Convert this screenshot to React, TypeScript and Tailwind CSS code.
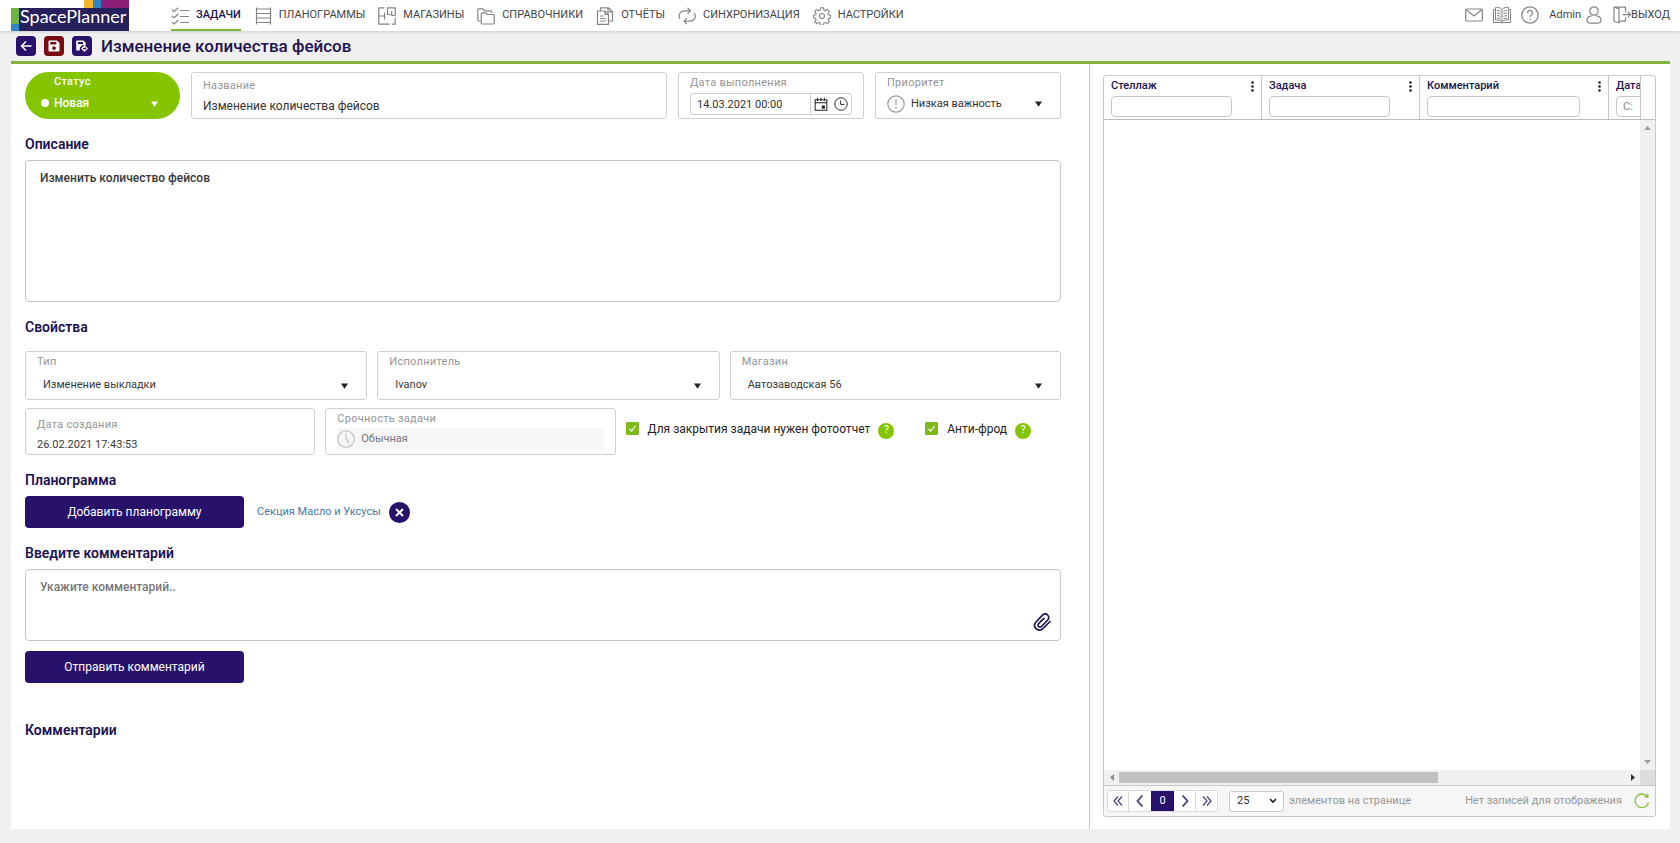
import { useState } from "react";
import type { ReactNode } from "react";

/* ---------- icons ---------- */

function LineIcon({ children, className = "size-[18px]", width = 1.2 }: { children: ReactNode; className?: string; width?: number }) {
  return (
    <svg viewBox="0 0 18 18" className={`${className} shrink-0`} fill="none" stroke="currentColor" strokeWidth={width} aria-hidden="true">
      {children}
    </svg>
  );
}

const TasksIcon = () => (
  <LineIcon>
    <path d="M.8 2.600l2.200 2L7.300.8M.8 8.800l2.200 2L7.300 7M.8 15l2.200 2 4.300-3.800M9 3.500h9M9 9.500h9M9 15.500h9" />
  </LineIcon>
);
const ShelvesIcon = () => (
  <LineIcon>
    <path d="M2.500.5v17M16.500.5v17M2.500 2h14M2.500 6.500h14M2.500 11h14M2.500 15.500h14" />
  </LineIcon>
);
const StoresIcon = () => (
  <LineIcon>
    <path d="M6.500.8H.8v16.400h10.700M14 17.200h3.200V10.500M17.200 8.500V.8H9.500v6.700h3M.8 9h5.700M6.500 5.500v7M17.200 8.500h-3.500V4" />
  </LineIcon>
);
const FoldersIcon = () => (
  <LineIcon>
    <path d="M3.500 14H1.800a1 1 0 0 1-1-1V2.800a1 1 0 0 1 1-1h4l1.700 2h6.300a1 1 0 0 1 1 1v1" />
    <path d="M4.200 6.800a1 1 0 0 1 1-1h3.600l1.500 1.700h6a1 1 0 0 1 1 1v7.500a1 1 0 0 1-1 1H5.200a1 1 0 0 1-1-1z" />
  </LineIcon>
);
const ReportsIcon = () => (
  <LineIcon>
    <path d="M1.500 4h7.500l3.500 3.500V17.300h-11zM9 4v3.500h3.500M4 9h4M4 11.500h6M4 14h6" />
    <path d="M4.500 4V.8h8l4 4V14h-4M12 .8v4h4.500" />
  </LineIcon>
);
const SyncIcon = () => (
  <LineIcon>
    <path d="M12 3.800H6.500A5.200 5.200 0 0 0 2 12M9.500.8l3 3-3 3M6.500 14.200H12A5.200 5.200 0 0 0 16.300 6M9 17.200l-3-3 3-3" />
  </LineIcon>
);
const GearIcon = () => (
  <LineIcon width={1.1}>
    <circle cx="9" cy="9" r="2.500" />
    <path d="M7.600.8h2.800l.5 2.400 1.300.6 2.100-1.400 2 2-1.400 2.100.5 1.200 2.300.5v2.700l-2.300.5-.5 1.200 1.400 2.100-2 2-2.100-1.400-1.300.6-.5 2.300H7.600l-.5-2.300-1.300-.6-2.100 1.400-2-2 1.400-2.100-.5-1.200L.5 10.900V8.200l2.100-.5.500-1.200-1.400-2.100 2-2 2.100 1.400 1.300-.6z" />
  </LineIcon>
);
const MailIcon = () => (
  <LineIcon>
    <rect x=".7" y="3" width="16.600" height="12" rx="1" />
    <path d="M1 3.500l8 6.500 8-6.500" />
  </LineIcon>
);
const BookIcon = () => (
  <LineIcon width={1}>
    <path d="M9 3.500C7.500 1.500 5 1.200 2.500 1.500v12.500C5 13.700 7.500 14 9 16c1.500-2 4-2.300 6.500-2V1.500C13 1.200 10.500 1.500 9 3.500zM9 3.500V16M2.500 3.500h-2v13H8l1 .8 1-.8h7.500v-13h-2" />
    <path d="M4 4.500q2 0 3.500 1M4 7q2 0 3.500 1M4 9.500q2 0 3.500 1M4 12q2 0 3.500 1M14 4.500q-2 0-3.500 1M14 7q-2 0-3.500 1M14 9.500q-2 0-3.500 1M14 12q-2 0-3.500 1" />
  </LineIcon>
);
const HelpIcon = () => (
  <LineIcon>
    <circle cx="9" cy="9" r="8.200" />
    <path d="M6.500 7a2.500 2.500 0 1 1 3.600 2.200Q9 9.800 9 11.200M9 12.700v1.500" />
  </LineIcon>
);
const UserIcon = () => (
  <LineIcon>
    <circle cx="9" cy="5" r="4.200" />
    <path d="M6.500 9.800C3.500 10.200 2 11.800 2 14c0 2.200 1.500 3.200 3.500 3.200h7c2 0 3.500-1 3.500-3.200 0-2.200-1.500-3.800-4.500-4.200" />
  </LineIcon>
);
const ExitIcon = () => (
  <LineIcon>
    <path d="M1 1.200l5 1.600v14l-5-1.600zM1 1.200h11.500v5M6 15.200h6.500v-4M9.500 8.700h8M14.800 6l2.700 2.700-2.700 2.700" />
  </LineIcon>
);
const CalendarIcon = () => (
  <LineIcon className="size-[14px]" width={1.300}>
    <path d="M1.500 3.500h15v13.500h-15zM1.500 7.500h15M4.500 1v4M9 1v4M13.500 1v4" />
    <path d="M10 11h4v4h-4z" fill="currentColor" stroke="none" />
  </LineIcon>
);
const ClockIcon = () => (
  <LineIcon className="size-[14px]" width={1.200}>
    <circle cx="9" cy="9" r="8" />
    <path d="M8.500 4.500v5h5" />
  </LineIcon>
);
const UrgencyIcon = () => (
  <LineIcon width={1.300}>
    <circle cx="9" cy="9" r="8.200" />
    <path d="M9 3.500V9l3 4" />
  </LineIcon>
);
const ImportanceIcon = () => (
  <LineIcon width={1.200}>
    <circle cx="9" cy="9" r="8.200" />
    <path d="M9 4.500v5.500M9 12v1.800" />
  </LineIcon>
);
const Triangle = ({ className = "" }: { className?: string }) => (
  <svg viewBox="0 0 8 6" className={`pointer-events-none h-[6px] w-[7px] shrink-0 ${className}`} aria-hidden="true">
    <path d="M0 0h8L4 6z" fill="currentColor" />
  </svg>
);

/* ---------- building blocks ---------- */

const NAV = [
  { label: "ЗАДАЧИ", icon: <TasksIcon />, active: true },
  { label: "ПЛАНОГРАММЫ", icon: <ShelvesIcon /> },
  { label: "МАГАЗИНЫ", icon: <StoresIcon /> },
  { label: "СПРАВОЧНИКИ", icon: <FoldersIcon /> },
  { label: "ОТЧЁТЫ", icon: <ReportsIcon /> },
  { label: "СИНХРОНИЗАЦИЯ", icon: <SyncIcon /> },
  { label: "НАСТРОЙКИ", icon: <GearIcon /> },
];

function Logo() {
  return (
    <a href="#home" className="shrink-0">
      <svg viewBox="0 0 118 31" className="block h-[31px] w-[118px]">
        <path d="M73 0h9v8h-9z" fill="#f5b52e" />
        <path d="M82 0h8v8h-8z" fill="#2f86c4" />
        <path d="M90 0h28v8H90z" fill="#8c1f78" />
        <path d="M0 8h8v16H0z" fill="#6fb43f" />
        <path d="M0 24h8v7H0z" fill="#2f86c4" />
        <path d="M8 8h110v23H8z" fill="#26205c" />
        <text x="9" y="23" fontSize="18" fill="#fff" fontFamily="Lato, sans-serif">
          SpacePlanner
        </text>
      </svg>
    </a>
  );
}

function Heading({ children, className }: { children: ReactNode; className: string }) {
  return <h2 className={`text-[14px] leading-6 font-semibold text-[#21124f] ${className}`}>{children}</h2>;
}

function SelectBox({ id, label, value }: { id: string; label: string; value: string }) {
  return (
    <div className="h-[49px] min-w-0 rounded-[3px] border border-[#cfcfcf] px-[11px]">
      <label htmlFor={id} className="block h-5 text-[11px] leading-[19px] tracking-wide text-[#959595]">
        {label}
      </label>
      <div className="flex h-[26px] items-center pr-[7px] pl-[6px]">
        <select id={id} className="min-w-0 flex-1 appearance-none text-[11px] text-[#3a3a3a] outline-none">
          <option>{value}</option>
        </select>
        <Triangle className="mt-[2px] text-[#222]" />
      </div>
    </div>
  );
}

function Check({ id, label }: { id: string; label: string }) {
  const [on, setOn] = useState(true);
  return (
    <div className="flex items-center">
      <span className="relative flex size-[13px]">
        <input
          id={id}
          type="checkbox"
          checked={on}
          onChange={(e) => setOn(e.target.checked)}
          className="size-[13px] appearance-none rounded-[1px] border border-[#7dba1a] checked:bg-[#7dba1a]"
        />
        {on && (
          <svg viewBox="0 0 13 13" className="pointer-events-none absolute inset-0" fill="none" stroke="#fff" strokeWidth="1.200" aria-hidden="true">
            <path d="M3.500 6.800l2 2.200 4-5" />
          </svg>
        )}
      </span>
      <label htmlFor={id} className="pl-[9px] text-[12px] leading-5 whitespace-nowrap text-[#222]">
        {label}
      </label>
      <button type="button" aria-label={`Справка: ${label}`} className="mt-1 ml-2 flex size-4 items-center justify-center rounded-full bg-[#84c400] text-[11px] text-white">
        ?
      </button>
    </div>
  );
}

const COLUMNS = [
  { label: "Стеллаж", input: "w-[121px]", col: "w-[158px]" },
  { label: "Задача", input: "w-[121px]", col: "w-[158px]" },
  { label: "Комментарий", input: "w-[153px]", col: "w-[189px]" },
];

function RackGrid() {
  return (
    <section className="flex min-h-0 flex-1 flex-col overflow-hidden rounded-[3px] border border-[#c8c8c8]">
      <div className="flex h-[44px] border-b border-[#bdbdbd]">
        <div className="min-w-0 flex-1 overflow-hidden">
          <table className="w-[650px] table-fixed border-separate border-spacing-0">
            <thead>
              <tr className="h-[43px] align-top text-[11px] text-[#21124f]">
                {COLUMNS.map((c) => (
                  <th key={c.label} className={`border-r border-[#c8c8c8] px-[7px] py-0 font-medium ${c.col}`}>
                    <span className="flex h-5 items-center justify-between">
                      {c.label}
                      <button type="button" aria-label={`Меню столбца ${c.label}`} className="text-[#222]">
                        <svg viewBox="0 0 3 11" className="block h-[11px] w-[3px]" fill="currentColor">
                          <circle cx="1.500" cy="1.500" r="1.300" />
                          <circle cx="1.500" cy="5.500" r="1.300" />
                          <circle cx="1.500" cy="9.500" r="1.300" />
                        </svg>
                      </button>
                    </span>
                    <input aria-label={`Фильтр: ${c.label}`} className={`block h-[21px] rounded-[4px] border border-[#c8c8c8] px-2 font-normal outline-none ${c.input}`} />
                  </th>
                ))}
                <th className="px-[7px] py-0 text-left font-medium">
                  <span className="flex h-5 items-center">Дата</span>
                  <input aria-label="Фильтр: Дата" placeholder="С:" className="block h-[21px] w-[120px] rounded-[4px] border border-[#c8c8c8] px-[6px] font-normal outline-none placeholder:text-[#8a8a8a]" />
                </th>
              </tr>
            </thead>
          </table>
        </div>
        <div className="w-[15px] border-l border-[#c8c8c8]" />
      </div>

      <div className="flex flex-1">
        <div className="flex-1" />
        <div className="flex w-[15px] flex-col items-center justify-between bg-[#f0f0f0] py-[6px] text-[#9a9a9a]">
          <svg viewBox="0 0 7 4" className="h-[4px] w-[7px]" fill="currentColor"><path d="M0 4h7L3.500 0z" /></svg>
          <svg viewBox="0 0 7 4" className="h-[4px] w-[7px]" fill="currentColor"><path d="M0 0h7L3.500 4z" /></svg>
        </div>
      </div>

      <div className="flex h-[15px]">
        <div className="flex flex-1 items-center bg-[#f0f0f0]">
          <span className="flex w-[15px] justify-center text-[#8a8a8a]">
            <svg viewBox="0 0 4 7" className="h-[7px] w-[4px]" fill="currentColor"><path d="M4 0v7L0 3.500z" /></svg>
          </span>
          <div className="h-[11px] flex-1">
            <div className="h-full w-[63%] bg-[#c1c1c1]" />
          </div>
          <span className="flex w-[15px] justify-center text-[#333]">
            <svg viewBox="0 0 4 7" className="h-[7px] w-[4px]" fill="currentColor"><path d="M0 0v7L4 3.500z" /></svg>
          </span>
        </div>
        <div className="w-[15px] bg-[#dcdcdc]" />
      </div>

      <div className="flex h-[31px] items-center border-t border-[#c8c8c8] bg-[#f6f6f6] pr-[5px] pl-[3px] text-[11px] text-[#979797]">
        <nav aria-label="Страницы" className="flex h-[22px] overflow-hidden rounded-[3px] border border-[#dadada] bg-white text-[#4a4178]">
          <button type="button" aria-label="Первая" className="flex w-[21px] items-center justify-center border-r border-[#dadada]">
            <svg viewBox="0 0 10 10" className="size-[10px]" fill="none" stroke="currentColor" strokeWidth="1.200"><path d="M5 .5L1 5l4 4.500M9 .5L5 5l4 4.500" /></svg>
          </button>
          <button type="button" aria-label="Предыдущая" className="flex w-[22px] items-center justify-center">
            <svg viewBox="0 0 8 12" className="h-[12px] w-[8px]" fill="none" stroke="currentColor" strokeWidth="1.800"><path d="M6.500.5L1.500 6l5 5.500" /></svg>
          </button>
          <button type="button" aria-current="page" className="flex w-[23px] items-center justify-center bg-[#27116a] text-white">0</button>
          <button type="button" aria-label="Следующая" className="flex w-[22px] items-center justify-center border-r border-[#dadada]">
            <svg viewBox="0 0 8 12" className="h-[12px] w-[8px]" fill="none" stroke="currentColor" strokeWidth="1.800"><path d="M1.500.5l5 5.500-5 5.500" /></svg>
          </button>
          <button type="button" aria-label="Последняя" className="flex w-[21px] items-center justify-center">
            <svg viewBox="0 0 10 10" className="size-[10px]" fill="none" stroke="currentColor" strokeWidth="1.200"><path d="M1 .5L5 5 1 9.500M5 .5L9 5 5 9.500" /></svg>
          </button>
        </nav>
        <div className="relative ml-[11px] flex items-center">
          <select id="page-size" className="h-[21px] w-[55px] appearance-none rounded-[3px] border border-[#c8c8c8] bg-white px-[7px] text-[11px] text-[#333] outline-none">
            <option>25</option>
          </select>
          <svg viewBox="0 0 8 6" className="pointer-events-none absolute right-[7px] h-[6px] w-[8px]" fill="none" stroke="#222" strokeWidth="1.600"><path d="M1 1l3 3 3-3" /></svg>
        </div>
        <label htmlFor="page-size" className="pl-[5px]">элементов на странице</label>
        <span className="ml-auto">Нет записей для отображения</span>
        <button type="button" aria-label="Обновить" className="ml-3 text-[#86bf3c]">
          <svg viewBox="0 0 16 16" className="block size-4" fill="none" stroke="currentColor" strokeWidth="1.300">
            <path d="M14.500 9.500A6.800 6.800 0 1 1 13 3.300M13.800.8v3.200h-3.200" />
          </svg>
        </button>
      </div>
    </section>
  );
}

/* ---------- page ---------- */

export default function App() {
  return (
    <div className="flex min-h-screen flex-col bg-[#f0f0f0] font-[Roboto,sans-serif]">
      <header className="flex h-[31px] bg-white pr-[10px] pl-[11px] shadow-[0_1px_3px_rgba(0,0,0,0.15)]">
        <Logo />
        <nav className="ml-[42px] flex gap-[13px]">
          {NAV.map((n) => (
            <a
              key={n.label}
              href="#section"
              className={`flex items-center gap-[7px] border-b-2 pt-[2px] text-[11px] ${n.active ? "border-[#7fb539] font-medium text-[#21124f]" : "border-transparent text-[#444]"}`}
            >
              <span className="text-[#858585]">{n.icon}</span>
              {n.label}
            </a>
          ))}
        </nav>
        <div className="ml-auto flex items-center gap-[10px] pb-px text-[11px] text-[#444]">
          <button type="button" aria-label="Почта" className="text-[#858585]"><MailIcon /></button>
          <button type="button" aria-label="Руководство" className="text-[#858585]"><BookIcon /></button>
          <button type="button" aria-label="Помощь" className="text-[#858585]"><HelpIcon /></button>
          <a href="#profile" className="flex items-center gap-1">
            Admin
            <span className="text-[#858585]"><UserIcon /></span>
          </a>
          <a href="#logout" className="flex items-center">
            <span className="text-[#858585]"><ExitIcon /></span>
            ВЫХОД
          </a>
        </div>
      </header>

      <div className="mr-[10px] ml-[11px] flex h-[33px] items-center border-b-[3px] border-[#86b33c] pl-[5px]">
        <div className="flex gap-2 text-white">
          <button type="button" aria-label="Назад" className="flex size-5 items-center justify-center rounded-[4px] bg-[#27116a]">
            <svg viewBox="0 0 12 12" className="size-3" fill="none" stroke="currentColor" strokeWidth="1.500"><path d="M11.500 6H1.500M6 1.500L1.500 6 6 10.500" /></svg>
          </button>
          <button type="button" aria-label="Сохранить" className="flex size-5 items-center justify-center rounded-[4px] bg-[#7a0a12]">
            <svg viewBox="0 0 12 12" className="size-3" fill="currentColor" fillRule="evenodd">
              <path d="M1.500.5H9L11.500 3v7.500a1 1 0 0 1-1 1h-9a1 1 0 0 1-1-1v-9a1 1 0 0 1 1-1zM2.300 2v2.500h6V2zM6 6.200a1.900 1.900 0 1 0 0 3.800 1.900 1.900 0 0 0 0-3.800z" />
            </svg>
          </button>
          <button type="button" aria-label="Сохранить и выйти" className="flex size-5 items-center justify-center rounded-[4px] bg-[#27116a]">
            <svg viewBox="0 0 12 12" className="size-3" fill="currentColor" fillRule="evenodd">
              <path d="M1 .5h6.500L9.800 3v2.200L6.500 5l-2.700 2.500V10.500H1a.8.8 0 0 1-.8-.8V1.300A.8.8 0 0 1 1 .5zM2 2v2h5V2z" />
              <path d="M8.500 5l3.500 3.500L8.500 12 5 8.500zM6.800 8v1h2v1.200l1.700-1.700-1.700-1.700V8z" />
            </svg>
          </button>
        </div>
        <h1 className="ml-[9px] text-[17px] leading-7 font-medium text-[#21124f]">Изменение количества фейсов</h1>
      </div>

      <main className="mr-[10px] mb-[14px] ml-[11px] grid flex-1 grid-cols-[1078fr_581fr] bg-white">
        <form className="flex min-w-0 flex-col pt-2 pr-7 pl-[14px]" onSubmit={(e) => e.preventDefault()}>
          <div className="flex h-[47px] gap-[11px]">
            <div className="flex w-[155px] flex-col rounded-full bg-[#84c400] pr-[22px] pl-4 font-medium text-white">
              <label htmlFor="status" className="h-5 pl-[13px] text-[11px] leading-5 tracking-wide">Статус</label>
              <div className="flex h-[22px] items-center">
                <span className="size-2 rounded-full bg-white" />
                <select id="status" className="min-w-0 flex-1 appearance-none pl-[5px] text-[12px] outline-none">
                  <option>Новая</option>
                </select>
                <Triangle className="mt-[2px]" />
              </div>
            </div>
            <div className="min-w-0 flex-1 rounded-[3px] border border-[#cfcfcf] px-[11px] pt-1">
              <label htmlFor="title" className="block h-[18px] text-[11px] leading-[18px] tracking-wide text-[#959595]">Название</label>
              <input id="title" defaultValue="Изменение количества фейсов" className="block h-[22px] w-full text-[12px] text-[#333] outline-none" />
            </div>
            <div className="w-[186px] rounded-[3px] border border-[#cfcfcf] px-[11px]">
              <label htmlFor="due" className="block h-5 text-[11px] leading-[19px] tracking-wide text-[#959595]">Дата выполнения</label>
              <div className="flex h-[22px] items-center rounded-[3px] border border-[#cfcfcf] text-[#222]">
                <input id="due" defaultValue="14.03.2021 00:00" className="h-full min-w-0 flex-1 border-r border-[#cfcfcf] pl-[6px] text-[11px] text-[#333] outline-none" />
                <button type="button" aria-label="Календарь" className="px-[3px]"><CalendarIcon /></button>
                <button type="button" aria-label="Время" className="px-[3px]"><ClockIcon /></button>
              </div>
            </div>
            <div className="w-[186px] rounded-[3px] border border-[#cfcfcf] px-[11px]">
              <label htmlFor="priority" className="block h-5 text-[11px] leading-[19px] tracking-wide text-[#959595]">Приоритет</label>
              <div className="flex h-[22px] items-center pr-[7px]">
                <span className="text-[#9c9c9c]"><ImportanceIcon /></span>
                <select id="priority" className="min-w-0 flex-1 appearance-none pl-[6px] text-[11px] text-[#333] outline-none">
                  <option>Низкая важность</option>
                </select>
                <Triangle className="text-[#222]" />
              </div>
            </div>
          </div>

          <Heading className="mt-[13px]">Описание</Heading>
          <textarea
            aria-label="Описание"
            defaultValue="Изменить количество фейсов"
            className="mt-1 h-[142px] resize-none rounded-[4px] border border-[#c6c6c6] px-[14px] py-[7px] text-[12px] leading-5 font-medium text-[#3a3a3a] outline-none"
          />

          <Heading className="mt-[13px]">Свойства</Heading>
          <div className="mt-3 grid grid-cols-[342fr_342fr_331fr] gap-[10px]">
            <SelectBox id="type" label="Тип" value="Изменение выкладки" />
            <SelectBox id="assignee" label="Исполнитель" value="Ivanov" />
            <SelectBox id="store" label="Магазин" value="Автозаводская 56" />
          </div>
          <div className="mt-2 grid h-[47px] grid-cols-[290fr_290fr_435fr] gap-[10px]">
            <div className="min-w-0 rounded-[3px] border border-[#cfcfcf] px-[11px] pt-[6px]">
              <label htmlFor="created" className="block h-5 text-[11px] leading-5 tracking-wide text-[#959595]">Дата создания</label>
              <input id="created" readOnly defaultValue="26.02.2021 17:43:53" className="block h-[18px] w-full text-[11px] text-[#3a3a3a] outline-none" />
            </div>
            <div className="min-w-0 rounded-[3px] border border-[#cfcfcf] px-[11px]">
              <label htmlFor="urgency" className="block h-[19px] text-[11px] leading-[19px] tracking-wide text-[#959595]">Срочность задачи</label>
              <div className="flex h-[22px] items-center rounded-[3px] bg-[#f6f6f6]">
                <span className="text-[#c4c4c4]"><UrgencyIcon /></span>
                <select id="urgency" disabled className="min-w-0 flex-1 appearance-none pl-[6px] text-[11px] text-[#777] opacity-100">
                  <option>Обычная</option>
                </select>
              </div>
            </div>
            <div className="flex h-[41px] min-w-0 items-center gap-[31px]">
              <Check id="photo" label="Для закрытия задачи нужен фотоотчет" />
              <Check id="fraud" label="Анти-фрод" />
            </div>
          </div>

          <Heading className="mt-[13px]">Планограмма</Heading>
          <div className="mt-1 flex items-center">
            <button type="button" className="h-8 w-[219px] rounded-[4px] bg-[#27116a] text-[12px] text-white">Добавить планограмму</button>
            <a href="#planogram" className="ml-[13px] text-[11px] text-[#4a7aa5]">Секция Масло и Уксусы</a>
            <button type="button" aria-label="Удалить планограмму" className="ml-2 flex size-[21px] items-center justify-center rounded-full bg-[#27116a]">
              <svg viewBox="0 0 9 9" className="size-[9px]" fill="none" stroke="#fff" strokeWidth="2"><path d="M1 1l7 7M8 1L1 8" /></svg>
            </button>
          </div>

          <Heading className="mt-[13px]">Введите комментарий</Heading>
          <div className="mt-1 flex h-[72px] rounded-[4px] border border-[#c6c6c6]">
            <textarea
              aria-label="Введите комментарий"
              placeholder="Укажите комментарий.."
              className="flex-1 resize-none px-[14px] py-[7px] text-[12px] leading-5 font-medium text-[#3a3a3a] outline-none placeholder:text-[#777]"
            />
            <button type="button" aria-label="Прикрепить файл" className="mr-[9px] mb-[9px] self-end text-[#21124f]">
              <svg viewBox="0 0 18 18" className="block size-[18px]" fill="none" stroke="currentColor" strokeWidth="1.700" strokeLinecap="round">
                <path d="M17 8.500l-7 7a4.800 4.800 0 0 1-7.500-.5 4.600 4.600 0 0 1 .5-6l6.500-6.800a3.500 3.500 0 0 1 5.200-.2 3.500 3.500 0 0 1 0 5l-6.200 6.500a2 2 0 0 1-2.900 0 2 2 0 0 1 0-2.900L11 5.300" />
              </svg>
            </button>
          </div>
          <button type="submit" className="mt-[10px] h-8 w-[219px] rounded-[4px] bg-[#27116a] text-[12px] text-white">Отправить комментарий</button>

          <Heading className="mt-[35px]">Комментарии</Heading>
        </form>

        <aside className="flex min-w-0 flex-col border-l border-[#c8c8c8] pt-[11px] pr-[14px] pb-3 pl-[13px]">
          <RackGrid />
        </aside>
      </main>
    </div>
  );
}
